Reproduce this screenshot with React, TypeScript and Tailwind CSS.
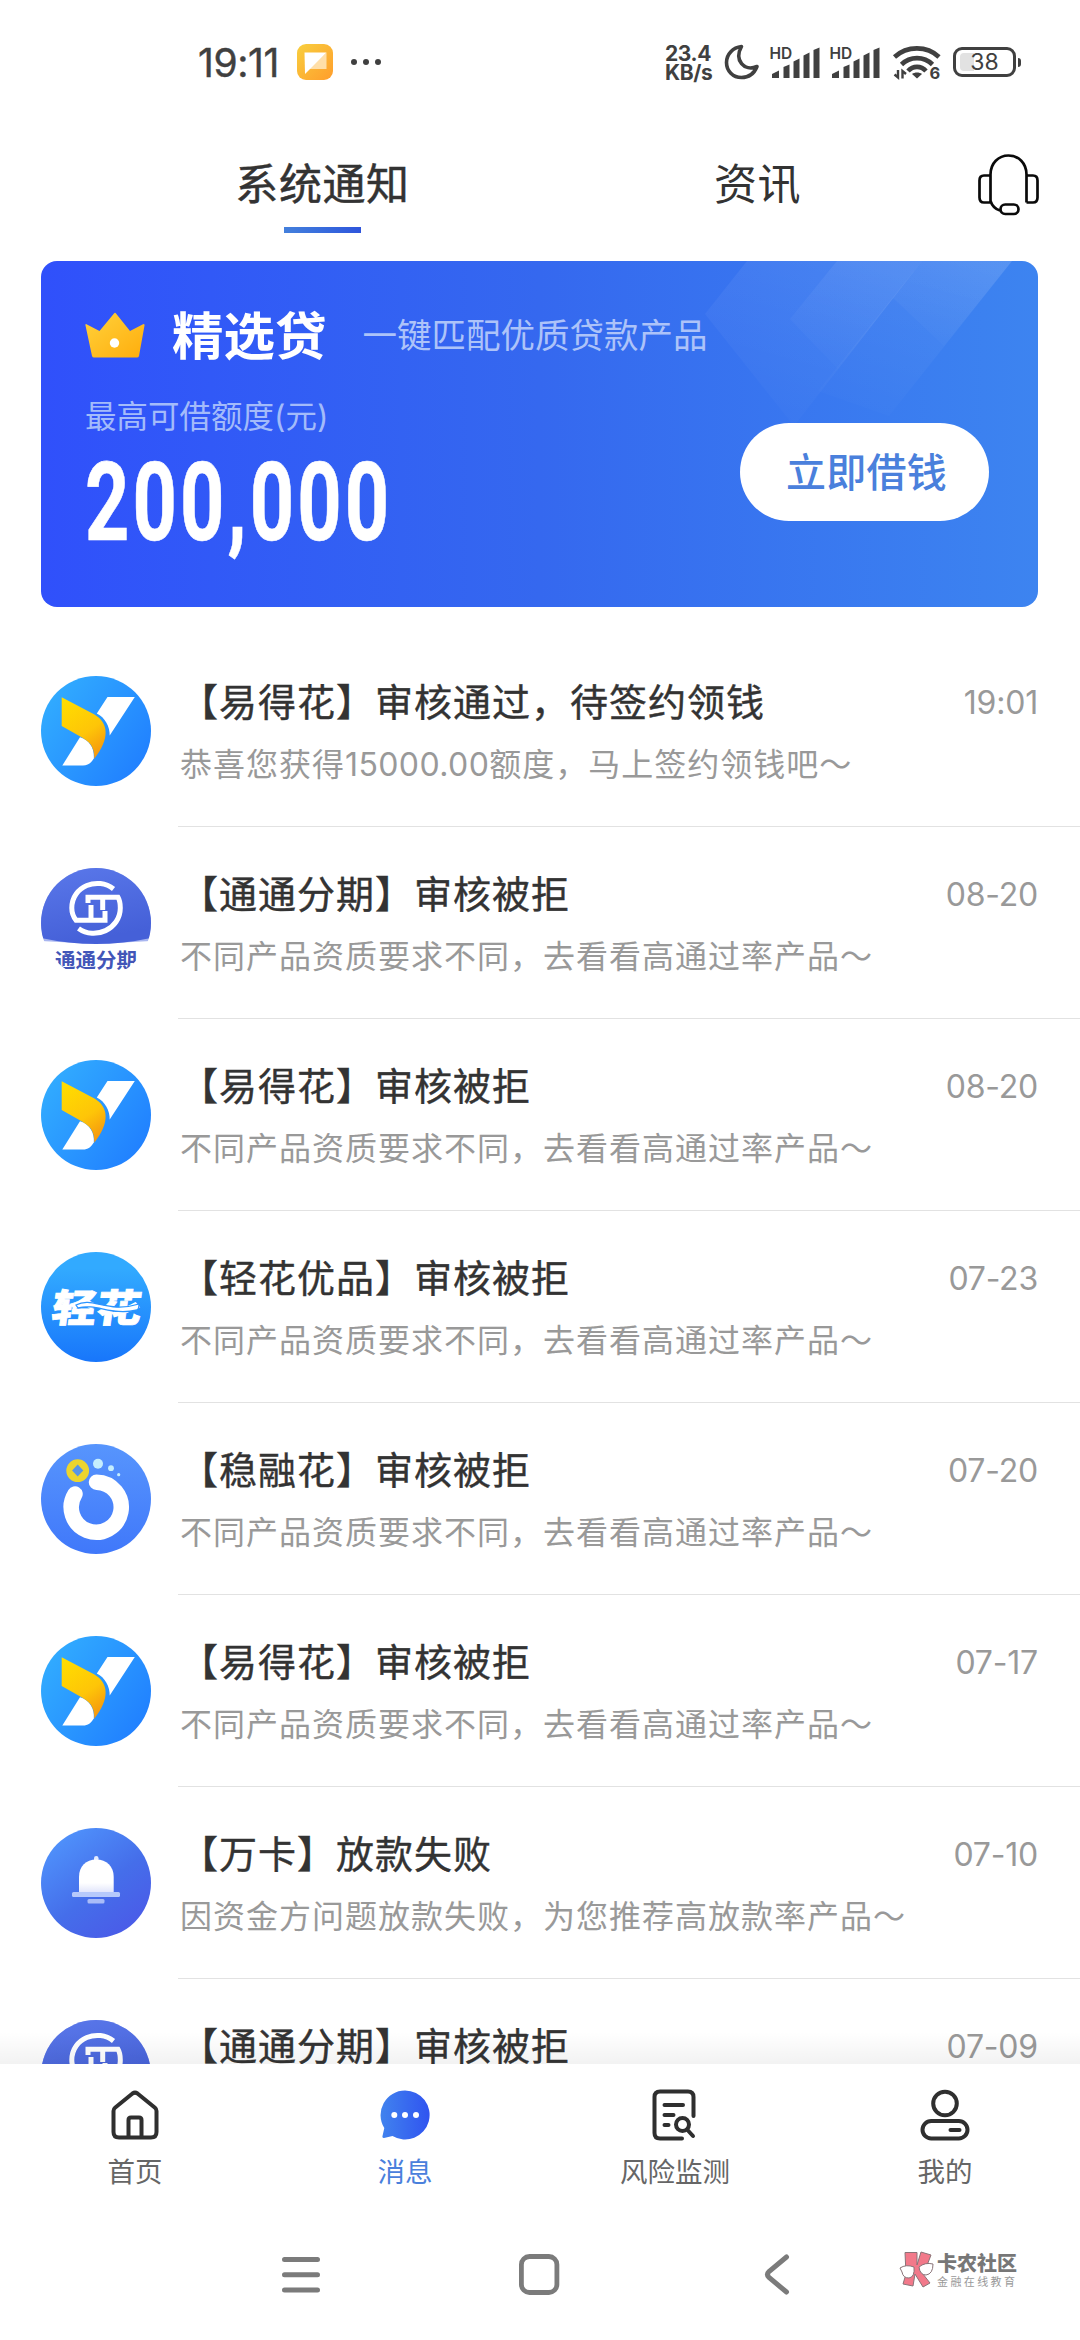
import React from 'react';

type LogoKind = 'yidehua' | 'tongtong' | 'qinghua' | 'wenrong' | 'bell';

interface Notice {
  logo: LogoKind;
  title: string;
  desc: React.ReactNode;
  date: string;
}

const REJECTED = '不同产品资质要求不同，去看看高通过率产品～';

const notices: Notice[] = [
  {
    logo: 'yidehua',
    title: '【易得花】审核通过，待签约领钱',
    desc: <>恭喜您获得<span className="tracking-[0.4px]">15000.00</span>额度，马上签约领钱吧～</>,
    date: '19:01',
  },
  { logo: 'tongtong', title: '【通通分期】审核被拒', desc: REJECTED, date: '08-20' },
  { logo: 'yidehua', title: '【易得花】审核被拒', desc: REJECTED, date: '08-20' },
  { logo: 'qinghua', title: '【轻花优品】审核被拒', desc: REJECTED, date: '07-23' },
  { logo: 'wenrong', title: '【稳融花】审核被拒', desc: REJECTED, date: '07-20' },
  { logo: 'yidehua', title: '【易得花】审核被拒', desc: REJECTED, date: '07-17' },
  { logo: 'bell', title: '【万卡】放款失败', desc: '因资金方问题放款失败，为您推荐高放款率产品～', date: '07-10' },
  { logo: 'tongtong', title: '【通通分期】审核被拒', desc: REJECTED, date: '07-09' },
];

const YidehuaLogo = () => (
  <svg viewBox="0 0 110 110" className="w-full h-full">
    <defs>
      <linearGradient id="ydBg" x1="0" y1="0.2" x2="1" y2="0.9">
        <stop offset="0" stopColor="#32adff" />
        <stop offset="1" stopColor="#1f7cff" />
      </linearGradient>
      <linearGradient id="ydGold" x1="0.2" y1="0" x2="0.7" y2="1">
        <stop offset="0" stopColor="#ffdc00" />
        <stop offset="0.6" stopColor="#fec508" />
        <stop offset="1" stopColor="#f5970f" />
      </linearGradient>
    </defs>
    <circle cx="55" cy="55" r="55" fill="url(#ydBg)" />
    <path d="M66.5 21H93.8L68.7 59.5C69 51 64 41.5 55.8 37.6Z" fill="#fff" />
    <path d="M39 61.2L21.3 89.5H42C47 89.5 50 87 52.8 82.5C53.5 73 49 64 39 61.2Z" fill="#fff" />
    <path d="M20.7 21.3L53 38.3C68 46.5 69 63 53.3 82.8C53.5 72 50 66.5 41 61.5L20.7 50Z" fill="url(#ydGold)" />
  </svg>
);

const TongtongLogo = () => (
  <svg viewBox="0 0 110 110" className="w-full h-full">
    <defs>
      <linearGradient id="ttBg" x1="0" y1="0" x2="0.3" y2="1">
        <stop offset="0" stopColor="#5a78ea" />
        <stop offset="1" stopColor="#4560d8" />
      </linearGradient>
      <clipPath id="ttClip">
        <circle cx="55" cy="55" r="55" />
      </clipPath>
    </defs>
    <g clipPath="url(#ttClip)">
      <rect width="110" height="110" fill="#fff" />
      <path d="M0 0H110V73Q55 77 0 73Z" fill="#a9b6f0" />
      <path d="M0 0H110V70Q82 76 55 76Q28 76 0 70Z" fill="url(#ttBg)" />
      <g fill="none" stroke="#fff" strokeWidth="5">
        <path d="M72.5 21C57 8.500 30.800 18 30.800 40C30.800 45 32.500 49 35 52.300H64V43" />
        <path d="M37.500 60.500C54 72.500 79.300 61 79.300 40C79.300 36 78.600 32 77 29.300H47V35" />
        <path d="M50 37V52M61.700 29V42" />
      </g>
      <text x="55" y="99.500" textAnchor="middle" fill="#4256b8" className="font-['Noto_Sans_CJK_SC',sans-serif] font-bold text-[20.500px]">
        通通分期
      </text>
    </g>
  </svg>
);

const QinghuaLogo = () => (
  <svg viewBox="0 0 110 110" className="w-full h-full">
    <defs>
      <linearGradient id="qhBg" x1="0" y1="0" x2="0" y2="1">
        <stop offset="0.15" stopColor="#32aaff" />
        <stop offset="1" stopColor="#1876fb" />
      </linearGradient>
    </defs>
    <circle cx="55" cy="55" r="55" fill="url(#qhBg)" />
    <text
      x="0"
      y="0"
      textAnchor="middle"
      transform="translate(54 70) skewX(-8) scale(1.160 1)"
      fill="#fff"
      stroke="#fff"
      strokeWidth="0.800"
      className="font-['Noto_Sans_CJK_SC',sans-serif] font-black text-[38.500px]"
    >
      轻花
    </text>
    <path d="M35 53C52 44 66 62 98 52C98 55 98 57 96 58C70 64 56 51 37 56Z" fill="#fff" stroke="#2a94ff" strokeWidth="1.300" />
  </svg>
);

const WenrongLogo = () => (
  <svg viewBox="0 0 110 110" className="w-full h-full">
    <defs>
      <linearGradient id="wrBg" x1="0" y1="0" x2="0" y2="1">
        <stop offset="0" stopColor="#5795fd" />
        <stop offset="1" stopColor="#4078fa" />
      </linearGradient>
    </defs>
    <circle cx="55" cy="55" r="55" fill="url(#wrBg)" />
    <path d="M55.500 38.200A25 25 0 1 1 34 50" fill="none" stroke="#fff" strokeWidth="15.500" strokeLinecap="round" />
    <circle cx="36.700" cy="26.700" r="11.400" fill="#ecd52e" />
    <path d="M36.700 20.500L42.300 26.500L36.700 32.500L31.100 26.500Z" fill="#5795e8" />
    <circle cx="57" cy="19.800" r="5" fill="#c5eefd" />
    <circle cx="70" cy="24.200" r="2.900" fill="#c5eefd" />
    <circle cx="77.700" cy="30.700" r="1.600" fill="#c5eefd" />
  </svg>
);

const BellLogo = () => (
  <svg viewBox="0 0 110 110" className="w-full h-full">
    <defs>
      <linearGradient id="blBg" x1="0.15" y1="0.1" x2="0.8" y2="0.95">
        <stop offset="0" stopColor="#4f91fb" />
        <stop offset="0.55" stopColor="#456eea" />
        <stop offset="1" stopColor="#4a5be8" />
      </linearGradient>
      <linearGradient id="blBody" x1="0" y1="0" x2="0" y2="1">
        <stop offset="0.7" stopColor="#fff" />
        <stop offset="1" stopColor="#dfe3fb" />
      </linearGradient>
    </defs>
    <circle cx="55" cy="55" r="55" fill="url(#blBg)" />
    <rect x="53" y="28" width="4.500" height="8" rx="2.200" fill="#e4ebff" />
    <path d="M38 65V49C38 38 45 31.500 55.300 31.500C65.500 31.500 72.700 38 72.700 49V65Z" fill="url(#blBody)" />
    <rect x="31" y="64" width="48" height="5" rx="1.500" fill="#b6c9fb" />
    <rect x="46.500" y="71" width="17" height="4.500" rx="1.500" fill="#a9bcf8" />
  </svg>
);

const logos: Record<LogoKind, React.FC> = {
  yidehua: YidehuaLogo,
  tongtong: TongtongLogo,
  qinghua: QinghuaLogo,
  wenrong: WenrongLogo,
  bell: BellLogo,
};

const Signal = () => (
  <svg viewBox="0 0 50 34" className="w-[50px] h-[34px] overflow-visible">
    <text x="-1.500" y="13.500" fill="#404040" className="font-['Inter',sans-serif] font-semibold text-[15.500px]">HD</text>
    <g fill="#404040">
      <path d="M1 33V29L8 25.500V33Z" />
      <path d="M12.500 33V22L18.500 19.500V33Z" />
      <path d="M22.500 33V16.500L28.500 13.500V33Z" />
      <path d="M32.500 33V10.500L38.500 7.500V33Z" />
      <path d="M42.500 33V5L48.500 2.500V33Z" />
    </g>
  </svg>
);

const StatusBar = () => (
  <div className="flex items-center h-[124px] pl-[198px] pr-[59px] text-[#404040] font-['Inter',sans-serif]">
    <span className="w-[99px] text-[39px] leading-none font-normal tracking-[-0.4px] [-webkit-text-stroke:0.4px_#404040]">19:11</span>
    <svg viewBox="0 0 36 36" className="w-9 h-9">
      <defs>
        <linearGradient id="appBg" x1="0" y1="0" x2="1" y2="1">
          <stop offset="0" stopColor="#f8cf3e" />
          <stop offset="1" stopColor="#ff9d2c" />
        </linearGradient>
      </defs>
      <rect width="36" height="36" rx="9" fill="url(#appBg)" />
      <path d="M29.500 8.500V25H12Z" fill="#ffdfa8" />
      <path d="M7.500 8.500H29.500L8 30Z" fill="#fff" />
    </svg>
    <div className="flex gap-1.5 ml-[18px]">
      <i className="w-1.5 h-1.5 rounded-full bg-[#404040]" />
      <i className="w-1.5 h-1.5 rounded-full bg-[#404040]" />
      <i className="w-1.5 h-1.5 rounded-full bg-[#404040]" />
    </div>
    <div className="flex items-center ml-auto">
      <div className="w-[59px] mt-0.5 text-[21px] leading-[19px] font-bold tracking-[-0.4px]">
        <div>23.4</div>
        <div>KB/s</div>
      </div>
      <svg viewBox="0 0 36 36" className="w-9 h-9 mr-[11px]">
        <path d="M17.500 2.500C10 16 20 28 33 22.500C30 30 24 33.500 17.500 33.500C9 33.500 2.500 27 2.500 18.500C2.500 10 9 3.500 17.500 2.500Z" fill="none" stroke="#404040" strokeWidth="3.600" strokeLinejoin="round" />
      </svg>
      <Signal />
      <div className="w-2.5" />
      <Signal />
      <svg viewBox="0 0 48 36" className="w-12 h-9 ml-3 overflow-visible">
        <g fill="none" stroke="#404040" strokeWidth="4.600">
          <path d="M1.500 13C14 1.500 34 1.500 46 13" />
          <path d="M8.500 20.500C17 12 31 12 39.500 20.500" />
          <path d="M15 27C20 21.500 28 21.500 33 27" />
        </g>
        <path d="M24 34.500L19 30C21.500 28 26.500 28 29 30Z" fill="#404040" />
        <path d="M5 26V33.500L1.500 30.500M9.500 34.500V27L13 30" fill="none" stroke="#404040" strokeWidth="2.400" />
        <text x="36.500" y="35" fill="#404040" className="font-['Inter',sans-serif] font-bold text-[16.500px]">6</text>
      </svg>
      <div className="flex items-center ml-[12px]">
        <div className="relative flex items-center justify-center w-[63px] h-[30px] rounded-[9px] border-[3px] border-[#404040]">
          <div className="absolute left-1 top-[3px] w-3.5 h-[18px] rounded-l-[4px] bg-[#e2e2e2]" />
          <span className="relative text-[23px] leading-none">38</span>
        </div>
        <div className="ml-[2px] w-[3px] h-[9px] rounded-r bg-[#404040]" />
      </div>
    </div>
  </div>
);

const Header = () => (
  <div className="flex h-[137px] pl-[105px] text-[#333]">
    <div className="flex flex-col items-center w-[435px] pt-[33px]">
      <span className="text-[43px] leading-[54px] tracking-[0.6px] [-webkit-text-stroke:0.5px_#333]">系统通知</span>
      <div className="mt-[16px] w-[77px] h-1.5 bg-linear-to-r from-[#4480dc] to-[#2f55dc]" />
    </div>
    <div className="flex flex-col items-center w-[435px] pt-[33px]">
      <span className="text-[43px] leading-[54px] tracking-[0.6px]">资讯</span>
    </div>
    <svg viewBox="0 0 64 64" className="w-16 h-16 ml-[2px] mt-[29px]" fill="none" stroke="#0a0a0a" strokeWidth="2.700">
      <path d="M13.500 49V21.500C13.500 10 21.500 2.500 31.500 2.500C41.500 2.500 49.500 10 49.500 21.500V49.500" />
      <path d="M13.500 22.500H7C4 22.500 2.500 24.500 2.500 27.500V44.500C2.500 48 4 49.500 7 49.500H13.500" />
      <path d="M49.500 22.500H56C59 22.500 60.500 24.500 60.500 27.500V44.500C60.500 48 59 49.500 56 49.500H49.500" />
      <path d="M13.500 48C15 52.500 18 56 23 57.500" />
      <rect x="23.500" y="51.500" width="18" height="9.500" rx="4.700" />
    </svg>
  </div>
);

const Banner = () => (
  <div className="relative mx-[41px] w-[997px] h-[346px] shrink-0 rounded-[16px] overflow-hidden bg-linear-to-r from-[#3050fb] via-[#3568ef] to-[#3d84f0]">
    <svg viewBox="0 0 997 346" className="absolute inset-0 w-full h-full">
      <defs>
        <linearGradient id="ray" x1="0.7" y1="0" x2="0.3" y2="1">
          <stop offset="0" stopColor="#fff" stopOpacity="0.07" />
          <stop offset="1" stopColor="#fff" stopOpacity="0.01" />
        </linearGradient>
      </defs>
      <path d="M706 0H881L753 165L664 53Z" fill="url(#ray)" />
      <path d="M796 0H881L797 108L749 58Z" fill="url(#ray)" />
      <path d="M881 0H971L848 155L777 130Z" fill="url(#ray)" />
      <path d="M881 0H971L903 85L852 37Z" fill="url(#ray)" />
    </svg>
    <div className="relative flex items-center h-full">
      <div className="flex-1 h-full pl-[44px] pt-[45px] text-white">
        <div className="flex items-center h-[60px]">
          <svg viewBox="0 0 60 46" className="w-[60px] h-[46px] -mt-0.5">
            <defs>
              <linearGradient id="crown" x1="0" y1="0" x2="1" y2="1">
                <stop offset="0" stopColor="#ffd23c" />
                <stop offset="1" stopColor="#ffad0c" />
              </linearGradient>
            </defs>
            <path d="M1 12L14.500 19L29 1.500Q30 0 31 1.500L45 19L58.500 12Q60 12 59.500 13.500L54 44Q53.500 45.500 52 45.500H9Q7.500 45.500 7 44L0.500 13.500Q0 12 1 12Z" fill="url(#crown)" />
            <circle cx="29.500" cy="31" r="4.700" fill="#fff" />
          </svg>
          <span className="ml-[27px] text-[51.5px] leading-[60px] font-bold">精选贷</span>
          <span className="ml-[36px] text-[34.5px] leading-[60px] text-[#adc3f9]">一键匹配优质贷款产品</span>
        </div>
        <div className="mt-[31px] text-[31.5px] leading-[40px] text-[#a3bbfa]">最高可借额度(元)</div>
        <div className="mt-[11px] origin-left scale-x-[0.71] w-[440px] text-[109px] leading-[110px] tracking-[4.4px] font-bold font-['Roboto',sans-serif] [-webkit-text-stroke:0.6px_#fff]">200,000</div>
      </div>
      <button className="mt-[75px] mr-[49px] pt-0.5 pl-1 w-[249px] h-[98px] rounded-full bg-white text-[40px] leading-none font-medium tracking-[0.3px] text-[#4a80dc]">
        立即借钱
      </button>
    </div>
  </div>
);

const NoticeRow: React.FC<{ notice: Notice }> = ({ notice }) => {
  const Logo = logos[notice.logo];
  return (
    <div className="flex h-[192px] shrink-0 pl-[41px]">
      <div className="w-[110px] h-[110px] mt-[41px]">
        <Logo />
      </div>
      <div className="flex-1 ml-[27px] pl-0.5 pr-[42px] border-b-[1.5px] border-[#e2e2e2]">
        <div className="flex justify-between mt-[44px] h-[46px] leading-[46px]">
          <span className="text-[38px] tracking-[1px] text-[#333] whitespace-nowrap [-webkit-text-stroke:0.4px_#333]">{notice.title}</span>
          <span className="pt-px text-[32px] tracking-[-0.2px] text-[#999]">{notice.date}</span>
        </div>
        <div className="mt-[20px] text-[32px] leading-[40px] tracking-[1px] text-[#999] whitespace-nowrap">{notice.desc}</div>
      </div>
    </div>
  );
};

const HomeIcon = () => (
  <svg viewBox="0 0 52 52" className="w-[52px] h-[52px]" fill="none" stroke="#2f2f2f" strokeWidth="4" strokeLinejoin="round">
    <path d="M4.500 22Q4.500 20 6 18.800L23.500 4.500Q26 2.800 28.500 4.500L46 18.800Q47.500 20 47.500 22V43Q47.500 48.500 42 48.500H10Q4.500 48.500 4.500 43Z" />
    <path d="M19.500 48V31Q19.500 28.500 22 28.500H30Q32.500 28.500 32.500 31V48" />
  </svg>
);

const MessageIcon = () => (
  <svg viewBox="0 0 52 52" className="w-[52px] h-[52px]">
    <defs>
      <linearGradient id="msg" x1="0" y1="0" x2="1" y2="0">
        <stop offset="0" stopColor="#4183ee" />
        <stop offset="1" stopColor="#3054f0" />
      </linearGradient>
    </defs>
    <path d="M26 1.500A24.500 24.500 0 1 1 13.500 47L5 49Q3 49 3.500 47L5.300 39A24.500 24.500 0 0 1 26 1.500Z" fill="url(#msg)" />
    <circle cx="15.300" cy="26" r="3" fill="#fff" />
    <circle cx="26" cy="26" r="3" fill="#fff" />
    <circle cx="37" cy="26" r="3" fill="#fff" />
  </svg>
);

const RiskIcon = () => (
  <svg viewBox="0 0 52 52" className="w-[52px] h-[52px]" fill="none" stroke="#2f2f2f" strokeWidth="4" strokeLinecap="round">
    <path d="M33 49.500H11Q5.500 49.500 5.500 44V8Q5.500 2.500 11 2.500H39Q44.500 2.500 44.500 8V27" />
    <path d="M15.500 16H34M15.500 26H24.500M15.500 36H19.500" />
    <circle cx="33.500" cy="35.500" r="6.500" />
    <path d="M38.500 41L44 47" />
  </svg>
);

const MeIcon = () => (
  <svg viewBox="0 0 52 52" className="w-[52px] h-[52px]" fill="none" stroke="#2f2f2f" strokeWidth="4" strokeLinecap="round">
    <circle cx="26" cy="14.500" r="11.800" />
    <rect x="3.500" y="32" width="45" height="17.500" rx="8.700" />
    <path d="M31.500 41H40.500" />
  </svg>
);

const tabs = [
  { label: '首页', Icon: HomeIcon },
  { label: '消息', Icon: MessageIcon, active: true },
  { label: '风险监测', Icon: RiskIcon },
  { label: '我的', Icon: MeIcon },
];

const TabBar = () => (
  <div className="relative grid grid-cols-4 h-[146px] shrink-0 bg-white">
    <div className="absolute inset-x-0 -top-8 h-8 bg-linear-to-b from-transparent to-black/5" />
    {tabs.map(({ label, Icon, active }) => (
      <div key={label} className="flex flex-col items-center pt-[25px]">
        <Icon />
        <span className={active ? 'mt-[13px] text-[27.5px] leading-[36px] text-[#4a80dc]' : 'mt-[13px] text-[27.5px] leading-[36px] text-[#666]'}>
          {label}
        </span>
      </div>
    ))}
  </div>
);

const SystemNav = () => (
  <div className="flex items-start h-[130px] pt-[42px] pl-[281px] shrink-0">
    <svg viewBox="0 0 40 46" className="w-10 h-[46px]" stroke="#7b7b7b" strokeWidth="5" strokeLinecap="round">
      <path d="M3.500 7.500H36.500M3.500 22.800H36.500M3.500 38H36.500" />
    </svg>
    <svg viewBox="0 0 44 46" className="w-11 h-[46px] ml-[196px]" fill="none" stroke="#7b7b7b" strokeWidth="4.800">
      <rect x="4.400" y="4.500" width="35.500" height="36" rx="8" />
    </svg>
    <svg viewBox="0 0 30 46" className="w-[30px] h-[46px] ml-[201px]" fill="none" stroke="#7b7b7b" strokeWidth="5" strokeLinecap="round">
      <path d="M24.500 5L7 19.500Q4 22.500 7 25.500L24.500 40" />
    </svg>
    <div className="flex ml-[107px] -mt-0.5">
      <svg viewBox="0 0 36 38" className="w-9 h-[38px]" stroke="#8a7378" strokeWidth="1">
        <path d="M6 2.500H18V15L22 2L32 5L27 18L20 19L31 33L24 37L16 24L14 36L4 34L7 24Z" fill="#f2798a" />
        <path d="M1 18Q7 14 15 17Q16 27 10 28Q4 28 3 22Z" fill="#fff" />
        <path d="M20 17Q26 12 34 14Q34 24 27 25Q21 25 20 17Z" fill="#fff" />
      </svg>
      <div className="ml-[2px] pt-1">
        <div className="text-[20px] leading-[21px] font-black text-[#777]">卡农社区</div>
        <div className="text-[11px] leading-[14px] tracking-[2.4px] text-[#999] whitespace-nowrap">金融在线教育</div>
      </div>
    </div>
  </div>
);

const App: React.FC = () => {
  return (
    <div className="flex flex-col w-[1080px] h-[2340px] bg-white overflow-hidden font-['Inter','Noto_Sans_CJK_SC',sans-serif]">
      <StatusBar />
      <Header />
      <Banner />
      <div className="flex flex-col flex-1 min-h-0 overflow-hidden pt-[28px]">
        {notices.map((notice, i) => (
          <NoticeRow key={i} notice={notice} />
        ))}
      </div>
      <TabBar />
      <SystemNav />
    </div>
  );
};

export default App;
